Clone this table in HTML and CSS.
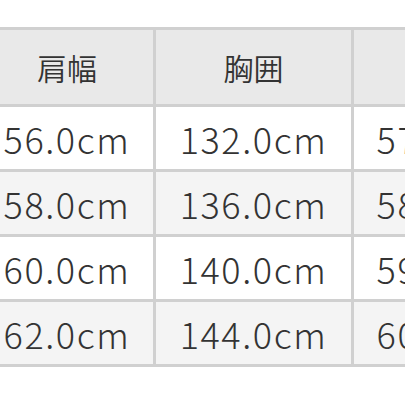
FILE: index.html
```html
<!DOCTYPE html>
<html lang="ja">
<head>
<meta charset="utf-8">
<link rel="stylesheet" href="styles.css">
</head>
<body>
<div class="size-table">
  <div class="cell head">肩幅</div>
  <div class="cell head">胸囲</div>
  <div class="cell head">着丈</div>
  <div class="cell">56.0cm</div>
  <div class="cell">132.0cm</div>
  <div class="cell">57.0cm</div>
  <div class="cell alt">58.0cm</div>
  <div class="cell alt">136.0cm</div>
  <div class="cell alt">58.0cm</div>
  <div class="cell">60.0cm</div>
  <div class="cell">140.0cm</div>
  <div class="cell">59.0cm</div>
  <div class="cell alt">62.0cm</div>
  <div class="cell alt">144.0cm</div>
  <div class="cell alt">60.0cm</div>
</div>
</body>
</html>
```
FILE: styles.css
```css
html, body {
  margin: 0;
  padding: 0;
  background: #ffffff;
  overflow: hidden;
  width: 405px;
  height: 405px;
}
.size-table {
  display: grid;
  grid-template-columns: 172px 195px 172px;
  grid-template-rows: 74px 62px 62px 62px 62px;
  gap: 3px;
  padding: 3px;
  background: #d0d0d0;
  width: max-content;
  margin-top: 27px;
  margin-left: -22px;
  font-family: "Noto Sans CJK JP", "Noto Sans", sans-serif;
  color: #333333;
}
.cell {
  display: flex;
  align-items: center;
  justify-content: center;
  background: #ffffff;
  font-size: 36px;
  font-weight: 300;
  letter-spacing: 1.6px;
  white-space: nowrap;
}
.cell.alt {
  background: #f4f4f4;
}
.cell.head {
  background: #e9e9e9;
  font-size: 30px;
  font-weight: 350;
  letter-spacing: 0;
}
```
